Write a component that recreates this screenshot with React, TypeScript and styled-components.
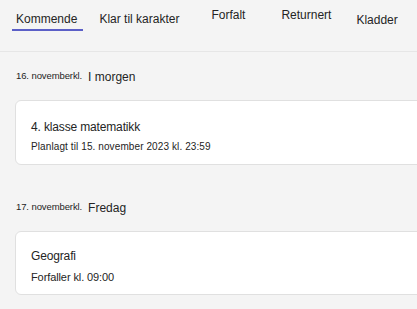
import React from "react";
import styled, { createGlobalStyle } from "styled-components";

const GlobalStyle = createGlobalStyle`
  html, body {
    margin: 0;
    padding: 0;
    background: #f4f4f4;
    overflow: hidden;
  }
  body {
    font-family: "Liberation Sans", Arial, sans-serif;
    color: #242424;
  }
`;

const Page = styled.div`
  width: 417px;
  height: 309px;
  background: #f4f4f4;
  overflow: hidden;
`;

const TabBar = styled.nav`
  display: flex;
  align-items: flex-start;
  height: 51px;
  padding-left: 12px;
  border-bottom: 1px solid #e6e6e6;
`;

const Tab = styled.div<{ $width: number; $shift: number; $active?: boolean }>`
  flex: none;
  width: ${(p) => p.$width}px;
  box-sizing: border-box;
  padding: ${(p) => 12 + p.$shift}px 0 3px 4px;
  font-size: 12px;
  line-height: 14px;
  white-space: nowrap;
  color: #242424;
  border-bottom: 2px solid transparent;
`;

const ActiveTab = styled(Tab)`
  width: auto;
  padding-right: 6px;
  margin-right: ${(p) => p.$width - 70}px;
  border-bottom-color: #5b5fc7;
`;

const Feed = styled.main`
  display: flex;
  flex-direction: column;
  gap: 33px;
  padding: 15px 0 0 15px;
`;

const Section = styled.section`
  display: flex;
  flex-direction: column;
  gap: 13px;
`;

const DateRow = styled.div`
  display: flex;
  align-items: baseline;
  gap: 6px;
  height: 20px;
  line-height: 20px;
  padding-left: 1px;
`;

const DateSmall = styled.span`
  font-size: 9.5px;
  letter-spacing: -0.1px;
  position: relative;
  top: -2px;
`;

const DayLabel = styled.span`
  font-size: 12px;
`;

const Card = styled.div<{ $top: number; $gap: number }>`
  display: flex;
  flex-direction: column;
  gap: ${(p) => p.$gap}px;
  margin-right: -30px;
  padding: ${(p) => p.$top}px 16px 10px 15px;
  background: #ffffff;
  border: 1px solid #e0e0e0;
  border-radius: 6px;
`;

const Title = styled.div`
  font-size: 12px;
  line-height: 16px;
  letter-spacing: -0.15px;
`;

const Meta = styled.div<{ $size: number }>`
  font-size: ${(p) => p.$size}px;
  line-height: 14px;
  letter-spacing: ${(p) => (p.$size > 10 ? -0.1 : 0.1)}px;
`;

export default function App() {
  return (
    <Page>
      <GlobalStyle />
      <TabBar>
        <ActiveTab $width={82} $shift={0} $active>
          Kommende
        </ActiveTab>
        <Tab $width={112} $shift={0}>Klar til karakter</Tab>
        <Tab $width={70} $shift={-4}>Forfalt</Tab>
        <Tab $width={75} $shift={-4}>Returnert</Tab>
        <Tab $width={70} $shift={1}>Kladder</Tab>
      </TabBar>
      <Feed>
        <Section>
          <DateRow>
            <DateSmall>16. novemberkl.</DateSmall>
            <DayLabel>I morgen</DayLabel>
          </DateRow>
          <Card $top={18} $gap={5}>
            <Title>4. klasse matematikk</Title>
            <Meta $size={10}>Planlagt til 15. november 2023 kl. 23:59</Meta>
          </Card>
        </Section>
        <Section>
          <DateRow>
            <DateSmall>17. novemberkl.</DateSmall>
            <DayLabel>Fredag</DayLabel>
          </DateRow>
          <Card $top={16} $gap={6}>
            <Title>Geografi</Title>
            <Meta $size={11}>Forfaller kl. 09:00</Meta>
          </Card>
        </Section>
      </Feed>
    </Page>
  );
}
